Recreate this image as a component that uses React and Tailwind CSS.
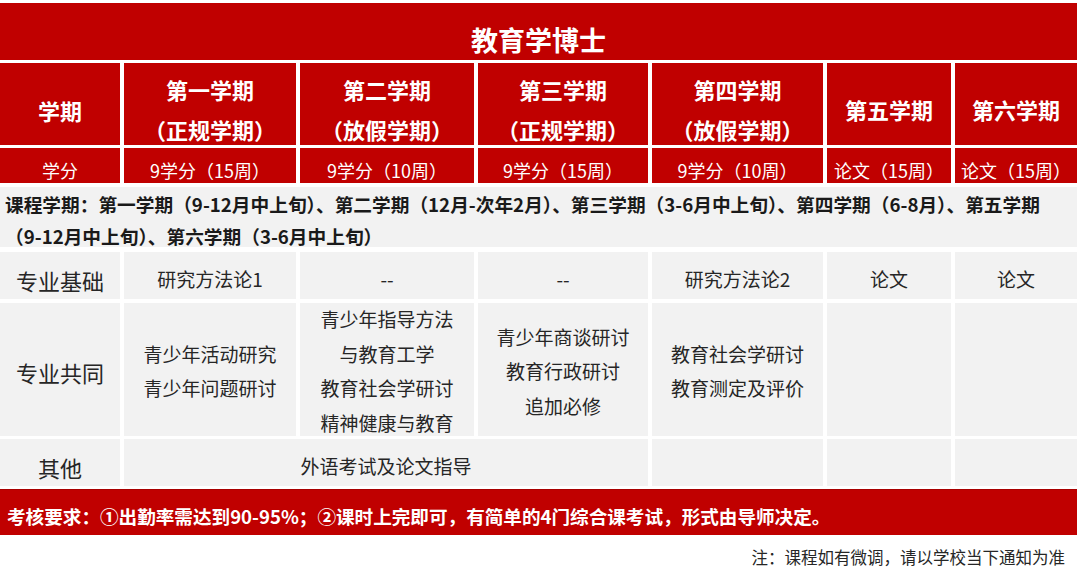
const cols = 'grid grid-cols-[120px_172px_174px_170px_171px_124px_122px] gap-x-[4px]';

const terms = [
  { top: '第一学期', sub: '（正规学期）', credit: '9学分（15周）' },
  { top: '第二学期', sub: '（放假学期）', credit: '9学分（10周）' },
  { top: '第三学期', sub: '（正规学期）', credit: '9学分（15周）' },
  { top: '第四学期', sub: '（放假学期）', credit: '9学分（10周）' },
  { top: '第五学期', credit: '论文（15周）' },
  { top: '第六学期', credit: '论文（15周）' },
];

const basics = ['研究方法论1', '--', '--', '研究方法论2', '论文', '论文'];

const common = [
  ['青少年活动研究', '青少年问题研讨'],
  ['青少年指导方法', '与教育工学', '教育社会学研讨', '精神健康与教育'],
  ['青少年商谈研讨', '教育行政研讨', '追加必修'],
  ['教育社会学研讨', '教育测定及评价'],
  [],
  [],
];

function Cell({ children, className = '' }) {
  return (
    <div className={`bg-[#f2f2f2] min-h-0 overflow-hidden flex flex-col items-center justify-center text-center text-[#262626] ${className}`}>
      {children}
    </div>
  );
}

export default function App() {
  return (
    <div className="w-[1080px] h-[572px] bg-white overflow-hidden font-['Noto_Sans_CJK_SC','Microsoft_YaHei',sans-serif]">
      <div className="w-[1077px] pt-[3px] flex flex-col">
        {/* title */}
        <div className="h-[57px] bg-[#c00000] flex items-center justify-center pt-[16px] text-white text-[27px] font-bold leading-none">
          教育学博士
        </div>

        {/* term header */}
        <div className={`${cols} grid-rows-[82px] mt-[3px] h-[82px] text-white font-bold text-[22px] leading-[26px]`}>
          <div className="bg-[#c00000] flex flex-col items-center justify-center pt-[12px]">学期</div>
          {terms.map((t) => (
            <div key={t.top} className="bg-[#c00000] flex flex-col gap-y-[14px] items-center justify-center pt-[10px]">
              <span>{t.top}</span>
              {t.sub && <span>{t.sub}</span>}
            </div>
          ))}
        </div>

        {/* credits */}
        <div className={`${cols} grid-rows-[35px] mt-[3px] h-[35px] text-white text-[18px] leading-[24px]`}>
          <div className="bg-[#c00000] flex items-center justify-center pt-[9px]">学分</div>
          {terms.map((t) => (
            <div key={t.top} className="bg-[#c00000] flex items-center justify-center pt-[9px] whitespace-nowrap">
              {t.credit}
            </div>
          ))}
        </div>

        {/* schedule note */}
        <div className="mt-[4px] h-[60px] bg-[#f2f2f2] px-[5px] pt-[1px] text-[18.7px] font-bold leading-[32px] text-[#1a1a1a]">
          <div className="whitespace-nowrap">
            课程学期：第一学期（9-12月中上旬）、第二学期（12月-次年2月）、第三学期（3-6月中上旬）、第四学期（6-8月）、第五学期
          </div>
          <div className="whitespace-nowrap">（9-12月中上旬）、第六学期（3-6月中上旬）</div>
        </div>

        {/* 专业基础 */}
        <div className={`${cols} grid-rows-[47px] mt-[5px] h-[47px] text-[19px] leading-[26px]`}>
          <Cell className="text-[22px] pt-[8px]">专业基础</Cell>
          {basics.map((b, i) => (
            <Cell key={i} className="pt-[6px]">{b}</Cell>
          ))}
        </div>

        {/* 专业共同 */}
        <div className={`${cols} grid-rows-[133px] mt-[4px] h-[133px] text-[19px] leading-[26px]`}>
          <Cell className="text-[22px] pt-[4px]">专业共同</Cell>
          {common.map((lines, i) => (
            <Cell key={i} className="pt-[3px] gap-y-[8.5px]">
              {lines.map((l) => (
                <span key={l}>{l}</span>
              ))}
            </Cell>
          ))}
        </div>

        {/* 其他 */}
        <div className={`${cols} grid-rows-[47px] mt-[3px] h-[47px] text-[19px] leading-[26px]`}>
          <Cell className="text-[22px] pt-[8px]">其他</Cell>
          <Cell className="col-span-3 pt-[6px]">外语考试及论文指导</Cell>
          <Cell />
          <Cell />
          <Cell />
        </div>

        {/* assessment */}
        <div className="mt-[3px] h-[46px] bg-[#c00000] border-t border-[#a80000] flex items-center px-[7px] pt-[6px] text-white font-bold text-[18.6px] whitespace-nowrap">
          考核要求：①出勤率需达到90-95%；②课时上完即可，有简单的4门综合课考试，形式由导师决定。
        </div>

        <div className="h-[37px] flex items-center justify-end pr-[12px] pt-[8px] text-[16.5px] text-[#262626]">
          注：课程如有微调，请以学校当下通知为准
        </div>
      </div>
    </div>
  );
}
